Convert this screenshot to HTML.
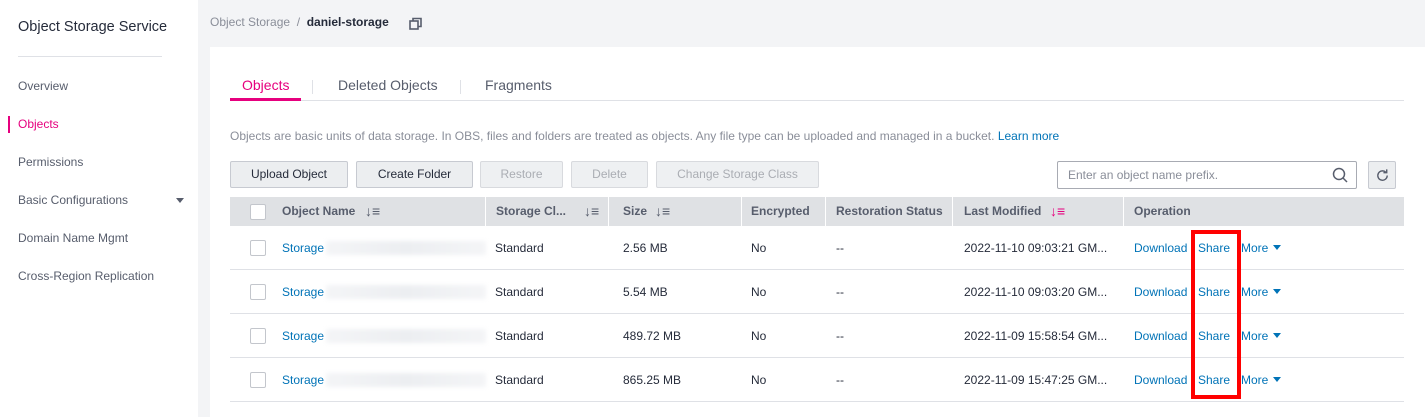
<!DOCTYPE html>
<html><head><meta charset="utf-8"><style>
*{box-sizing:border-box;margin:0;padding:0}
body{width:1425px;height:417px;overflow:hidden;font-family:"Liberation Sans",Arial,sans-serif;background:#f3f4f6;position:relative;font-size:12px;color:#252b3a}
.side{position:absolute;left:0;top:0;width:198px;height:417px;background:#fff}
.side .t{position:absolute;left:18px;top:19px;font-size:14.5px;color:#252b3a}
.side .hr{position:absolute;left:18px;top:56px;width:144px;height:1px;background:#dfe1e6}
.side .i{position:absolute;left:18px;font-size:12px;color:#575d6c}
.side .act{color:#e6007e}
.bar{position:absolute;left:8px;top:116px;width:2px;height:17px;background:#e6007e}
.crumb{position:absolute;left:210px;top:15px;font-size:12px;color:#8a8e99}
.crumb b{color:#252b3a}
.card{position:absolute;left:210px;top:47px;width:1215px;height:370px;background:#fff}
.tab{position:absolute;top:77px;font-size:14px;color:#575d6c}
.abs{position:absolute}
.btn{position:absolute;top:161px;height:27px;border:1px solid #c7cad1;background:#eceef0;border-radius:2px;text-align:center;line-height:25px;font-size:12px;color:#252b3a}
.dis{color:#aaadb3;background:#eef0f2;border-color:#d8dade}
.th{position:absolute;top:197px;height:29px;background:#dfe1e4;left:230px;width:1174px}
.h{position:absolute;top:204px;font-weight:bold;color:#575d6c;font-size:12px}
.s{position:absolute;top:203px;font-size:14px;color:#575d6c;font-weight:normal}
.sep{position:absolute;top:197px;width:1px;height:29px;background:#fff}
.row{position:absolute;left:230px;width:1174px;height:44px;border-bottom:1px solid #dfe1e6}
.cb{position:absolute;left:250px;width:16px;height:16px;border:1px solid #c3c6cc;border-radius:2px;background:#fff}
.c{position:absolute;font-size:12px;color:#252b3a}
.l{color:#0073b7}
.blur{position:absolute;left:326px;width:160px;height:14px;background:linear-gradient(90deg,#f4f5f7,#eceef1,#f4f5f7);filter:blur(2px)}
.tri{display:inline-block;width:0;height:0;border-left:4px solid transparent;border-right:4px solid transparent;border-top:5px solid #0073b7;margin-left:5px;vertical-align:2px}
</style></head><body>
<div class="side">
<div class="t">Object Storage Service</div><div class="hr"></div>
<div class="i" style="top:79px">Overview</div>
<div class="bar"></div><div class="i act" style="top:117px">Objects</div>
<div class="i" style="top:155px">Permissions</div>
<div class="i" style="top:193px">Basic Configurations</div>
<div class="abs" style="left:176px;top:198px;border-left:4px solid transparent;border-right:4px solid transparent;border-top:5px solid #575d6c"></div>
<div class="i" style="top:231px">Domain Name Mgmt</div>
<div class="i" style="top:269px">Cross-Region Replication</div>
</div>
<div class="crumb">Object Storage &nbsp;/ &nbsp;<b>daniel-storage</b></div>
<svg class="abs" style="left:409px;top:17px" width="14" height="14" viewBox="0 0 14 14"><rect x="1" y="4" width="8" height="8" fill="none" stroke="#575d6c" stroke-width="1.6"/><path d="M4 4V1.5H12V9.5H9" fill="none" stroke="#575d6c" stroke-width="1.6"/></svg>
<div class="card"></div>
<div class="abs" style="left:230px;top:100px;width:1174px;height:1px;background:#dfe1e6"></div>
<div class="tab" style="left:242px;color:#e6007e">Objects</div>
<div class="abs" style="left:230px;top:98px;width:71px;height:3px;background:#e6007e"></div>
<div class="abs" style="left:312px;top:80px;width:1px;height:14px;background:#dfe1e6"></div>
<div class="tab" style="left:338px">Deleted Objects</div>
<div class="abs" style="left:460px;top:80px;width:1px;height:14px;background:#dfe1e6"></div>
<div class="tab" style="left:485px">Fragments</div>
<div class="abs" style="left:230px;top:129px;color:#8a8e99;font-size:12px">Objects are basic units of data storage. In OBS, files and folders are treated as objects. Any file type can be uploaded and managed in a bucket. <span style="color:#0073b7">Learn more</span></div>
<div class="btn" style="left:230px;width:118px">Upload Object</div>
<div class="btn" style="left:356px;width:117px">Create Folder</div>
<div class="btn dis" style="left:480px;width:83px">Restore</div>
<div class="btn dis" style="left:571px;width:77px">Delete</div>
<div class="btn dis" style="left:656px;width:163px">Change Storage Class</div>
<div class="abs" style="left:1057px;top:161px;width:300px;height:28px;border:1px solid #a8abb3;border-radius:2px;background:#fff"><span style="position:absolute;left:10px;top:6px;color:#8a8e99">Enter an object name prefix.</span>
<svg style="position:absolute;right:8px;top:5px" width="16" height="16" viewBox="0 0 16 16"><circle cx="7" cy="7" r="5.5" fill="none" stroke="#575d6c" stroke-width="1.5"/><path d="M11 11L15 15" stroke="#575d6c" stroke-width="1.5"/></svg></div>
<div class="abs" style="left:1368px;top:161px;width:28px;height:28px;border:1px solid #c7cad1;background:#eceef0;border-radius:2px">
<svg style="position:absolute;left:6px;top:6px" width="15" height="15" viewBox="0 0 16 16"><path d="M13 8A5 5 0 1 1 11.5 4.5" fill="none" stroke="#575d6c" stroke-width="1.5"/><path d="M12.5 1.5V5H9" fill="none" stroke="#575d6c" stroke-width="1.5"/></svg></div>
<div class="th"></div>
<div class="cb" style="top:204px"></div>
<div class="sep" style="left:485px"></div><div class="sep" style="left:608px"></div><div class="sep" style="left:741px"></div><div class="sep" style="left:825px"></div><div class="sep" style="left:952px"></div><div class="sep" style="left:1123px"></div>
<div class="h" style="left:282px">Object Name</div><div class="s" style="left:365px">&#8595;&#8801;</div>
<div class="h" style="left:496px">Storage Cl...</div><div class="s" style="left:584px">&#8595;&#8801;</div>
<div class="h" style="left:623px">Size</div><div class="s" style="left:655px">&#8595;&#8801;</div>
<div class="h" style="left:751px">Encrypted</div>
<div class="h" style="left:836px">Restoration Status</div>
<div class="h" style="left:964px">Last Modified</div><div class="s" style="left:1050px;color:#e6007e">&#8595;&#8801;</div>
<div class="h" style="left:1134px">Operation</div>

<div class="row" style="top:226px"></div>
<div class="row" style="top:270px"></div>
<div class="row" style="top:314px"></div>
<div class="row" style="top:358px"></div>

<div class="cb" style="top:240px"></div><div class="c l" style="left:282px;top:241px">Storage</div><div class="blur" style="top:241px"></div>
<div class="c" style="left:495px;top:241px">Standard</div><div class="c" style="left:623px;top:241px">2.56 MB</div><div class="c" style="left:751px;top:241px">No</div><div class="c" style="left:836px;top:241px">--</div><div class="c" style="left:964px;top:241px">2022-11-10 09:03:21 GM...</div>
<div class="c l" style="left:1134px;top:241px">Download</div><div class="c l" style="left:1198px;top:241px">Share</div><div class="c l" style="left:1241px;top:241px">More<span class="tri"></span></div>

<div class="cb" style="top:284px"></div><div class="c l" style="left:282px;top:285px">Storage</div><div class="blur" style="top:285px"></div>
<div class="c" style="left:495px;top:285px">Standard</div><div class="c" style="left:623px;top:285px">5.54 MB</div><div class="c" style="left:751px;top:285px">No</div><div class="c" style="left:836px;top:285px">--</div><div class="c" style="left:964px;top:285px">2022-11-10 09:03:20 GM...</div>
<div class="c l" style="left:1134px;top:285px">Download</div><div class="c l" style="left:1198px;top:285px">Share</div><div class="c l" style="left:1241px;top:285px">More<span class="tri"></span></div>

<div class="cb" style="top:328px"></div><div class="c l" style="left:282px;top:329px">Storage</div><div class="blur" style="top:329px"></div>
<div class="c" style="left:495px;top:329px">Standard</div><div class="c" style="left:623px;top:329px">489.72 MB</div><div class="c" style="left:751px;top:329px">No</div><div class="c" style="left:836px;top:329px">--</div><div class="c" style="left:964px;top:329px">2022-11-09 15:58:54 GM...</div>
<div class="c l" style="left:1134px;top:329px">Download</div><div class="c l" style="left:1198px;top:329px">Share</div><div class="c l" style="left:1241px;top:329px">More<span class="tri"></span></div>

<div class="cb" style="top:372px"></div><div class="c l" style="left:282px;top:373px">Storage</div><div class="blur" style="top:373px"></div>
<div class="c" style="left:495px;top:373px">Standard</div><div class="c" style="left:623px;top:373px">865.25 MB</div><div class="c" style="left:751px;top:373px">No</div><div class="c" style="left:836px;top:373px">--</div><div class="c" style="left:964px;top:373px">2022-11-09 15:47:25 GM...</div>
<div class="c l" style="left:1134px;top:373px">Download</div><div class="c l" style="left:1198px;top:373px">Share</div><div class="c l" style="left:1241px;top:373px">More<span class="tri"></span></div>

<div class="abs" style="left:1191px;top:230px;width:50px;height:169px;border:4px solid #f00"></div>
</body></html>
